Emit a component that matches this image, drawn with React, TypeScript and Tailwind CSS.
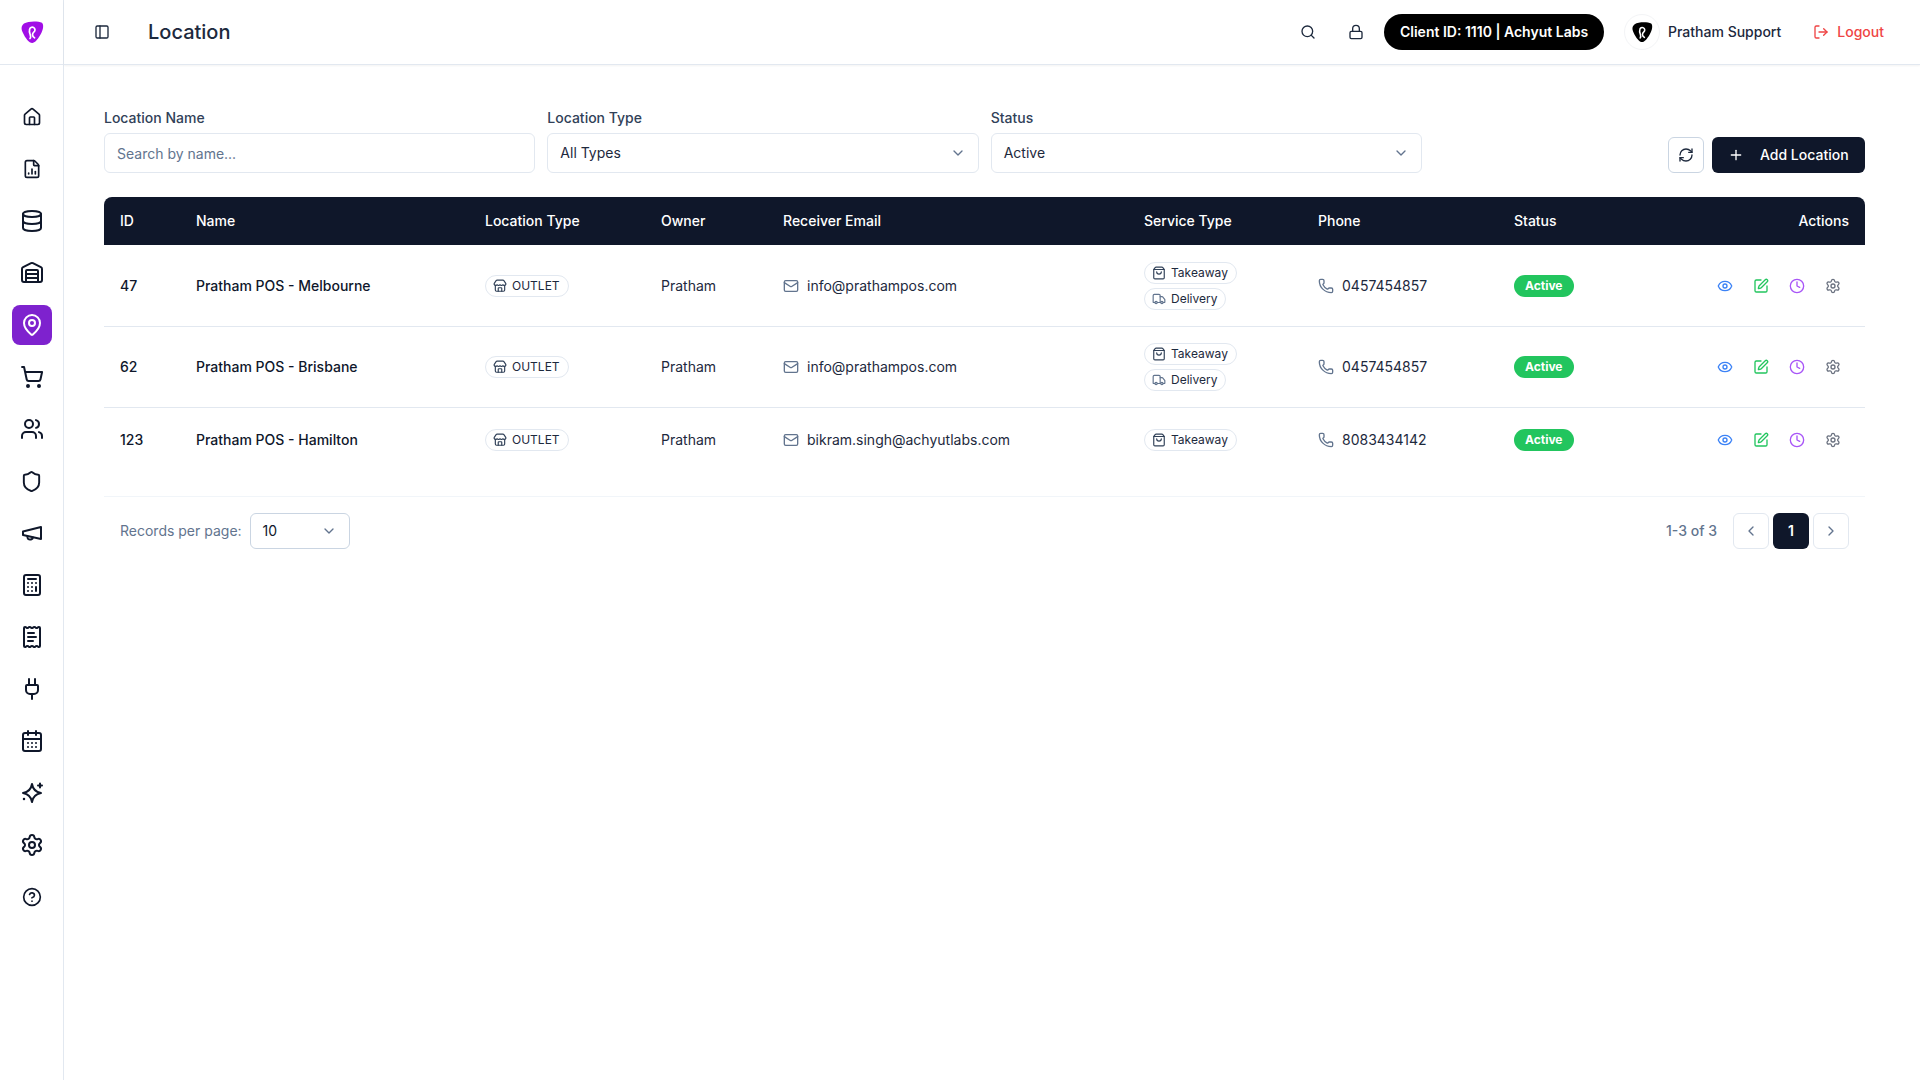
import {
  Calculator,
  CalendarDays,
  ChevronDown,
  ChevronLeft,
  ChevronRight,
  CircleHelp,
  Clock,
  Database,
  Eye,
  FileChartColumn,
  House,
  Lock,
  LogOut,
  Mail,
  MapPin,
  PanelLeft,
  Phone,
  Plug,
  Plus,
  ReceiptText,
  RefreshCw,
  Search,
  Settings,
  Shield,
  ShoppingBag,
  ShoppingCart,
  SquarePen,
  Store,
  Truck,
  Users,
  Warehouse,
} from "lucide-react"

function MegaphoneIcon({ size }: { size: number }) {
  return (
    <svg width={size} height={size} viewBox="0 0 24 24" fill="none" stroke="currentColor" strokeWidth="2" strokeLinecap="round" strokeLinejoin="round">
      <path d="M3 10.5 21 6v12L3 14z" />
      <path d="M7.5 15.5c-.4 2.4 1 3.4 3.5 3 1.2-.3 1.8-1 2-2" />
    </svg>
  )
}

function SparkleIcon({ size }: { size: number }) {
  return (
    <svg width={size} height={size} viewBox="0 0 24 24" fill="none" stroke="currentColor" strokeWidth="2" strokeLinecap="round" strokeLinejoin="round">
      <path d="M12 3c.8 5 3.5 8 9 9-5.500 1-8.200 4-9 9-.8-5-3.500-8-9-9 5.500-1 8.200-4 9-9Z" />
      <path d="M20 2.500v4M18 4.500h4" />
      <path d="M4 18h.01" strokeWidth="2.500" />
    </svg>
  )
}

const navItems = [
  { icon: House, size: 20 },
  { icon: FileChartColumn, size: 20 },
  { icon: Database, size: 24 },
  { icon: Warehouse, size: 24 },
  { icon: MapPin, size: 24, active: true },
  { icon: ShoppingCart, size: 24 },
  { icon: Users, size: 24 },
  { icon: Shield, size: 23 },
  { icon: MegaphoneIcon, size: 24 },
  { icon: Calculator, size: 24 },
  { icon: ReceiptText, size: 24 },
  { icon: Plug, size: 24 },
  { icon: CalendarDays, size: 24 },
  { icon: SparkleIcon, size: 24 },
  { icon: Settings, size: 24 },
  { icon: CircleHelp, size: 20 },
]

const locations = [
  {
    id: 47,
    name: "Pratham POS - Melbourne",
    email: "info@prathampos.com",
    services: ["Takeaway", "Delivery"],
    phone: "0457454857",
  },
  {
    id: 62,
    name: "Pratham POS - Brisbane",
    email: "info@prathampos.com",
    services: ["Takeaway", "Delivery"],
    phone: "0457454857",
  },
  {
    id: 123,
    name: "Pratham POS - Hamilton",
    email: "bikram.singh@achyutlabs.com",
    services: ["Takeaway"],
    phone: "8083434142",
  },
]

function Logo({ size, fill }: { size: number; fill: string }) {
  return (
    <svg width={size} height={size} viewBox="0 0 24 24">
      <path
        d="M4 3.500C8 1 18 .8 22 2.800c2 2 1.400 7-1.600 12-3 5-5.600 8.200-8.200 8.200-3 0-7-5-9.200-10C1 9 1 6 4 3.500Z"
        fill={fill}
      />
      <path
        d="M10 18.500c2.200-2.200-1.600-5.600-.4-9a2.700 2.700 0 1 1 4.400 2.400c-1.800 1.600-2.400 4 .6 6"
        fill="none"
        stroke="#fff"
        strokeWidth="1.700"
        strokeLinecap="round"
      />
    </svg>
  )
}

function Sidebar() {
  return (
    <aside className="flex w-16 shrink-0 flex-col border-r border-slate-200 bg-white">
      <div className="flex h-[65px] items-center justify-center border-b border-slate-200">
        <Logo size={24} fill="#a10ee6" />
      </div>
      <nav className="flex flex-col items-center gap-3 pt-8">
        {navItems.map((item, i) => {
          const Icon = item.icon
          return (
            <div
              key={i}
              className={
                item.active
                  ? "flex h-10 w-10 items-center justify-center rounded-lg bg-[#7e22ce] text-white"
                  : "flex h-10 w-10 items-center justify-center rounded-lg text-[#0f172a]"
              }
            >
              <Icon size={item.size} />
            </div>
          )
        })}
      </nav>
    </aside>
  )
}

function TopBar() {
  return (
    <header className="flex h-[65px] shrink-0 items-center border-b border-slate-200 bg-white pl-[30px] pr-[36px] shadow-xs">
      <PanelLeft size={16} className="text-slate-800" />
      <h1 className="ml-[38px] text-xl font-medium text-slate-800">Location</h1>
      <div className="ml-auto flex items-center">
        <Search size={16} className="text-slate-800" />
        <Lock size={16} className="ml-8 text-slate-800" />
        <div className="ml-5 flex h-9 w-[220px] items-center justify-center rounded-full bg-black text-sm font-semibold text-white">
          Client ID: 1110 | Achyut Labs
        </div>
        <div className="ml-5 flex h-9 w-9 items-center justify-center rounded-full border border-gray-100">
          <Logo size={22} fill="#000" />
        </div>
        <span className="ml-[8px] text-sm font-medium text-slate-800">Pratham Support</span>
        <div className="ml-8 flex items-center gap-2 text-sm font-medium text-[#ef4444]">
          <LogOut size={16} />
          Logout
        </div>
      </div>
    </header>
  )
}

function FilterSelect({ label, value }: { label: string; value: string }) {
  return (
    <div>
      <label className="mb-[5px] block text-sm font-medium text-slate-700">{label}</label>
      <button className="flex h-10 w-full items-center justify-between rounded-md border border-slate-200 bg-white px-3 text-sm text-slate-800">
        {value}
        <ChevronDown size={16} className="text-slate-500" />
      </button>
    </div>
  )
}

function Filters() {
  return (
    <div className="mb-6 flex items-end justify-between">
      <div className="grid w-[1318px] grid-cols-3 gap-3">
        <div>
          <label className="mb-[5px] block text-sm font-medium text-slate-700">Location Name</label>
          <input
            type="text"
            placeholder="Search by name..."
            className="h-10 w-full rounded-md border border-slate-200 bg-white px-3 text-sm outline-none placeholder:text-slate-500"
          />
        </div>
        <FilterSelect label="Location Type" value="All Types" />
        <FilterSelect label="Status" value="Active" />
      </div>
      <div className="flex items-center gap-2">
        <button className="flex h-9 w-9 items-center justify-center rounded-md border border-slate-300 bg-white text-slate-800">
          <RefreshCw size={16} />
        </button>
        <button className="flex h-9 w-[153px] items-center gap-[16px] rounded-md bg-[#0f172a] pl-[16px] text-sm font-medium text-white">
          <Plus size={16} />
          Add Location
        </button>
      </div>
    </div>
  )
}

function Pill({ icon, children }: { icon: React.ReactNode; children: React.ReactNode }) {
  return (
    <span className="inline-flex h-[22px] items-center gap-[5px] rounded-full border border-slate-200 bg-white pl-[7px] pr-2 text-xs text-slate-800">
      {icon}
      {children}
    </span>
  )
}

function LocationRow({ row }: { row: (typeof locations)[number] }) {
  return (
    <tr className="border-t border-slate-200 text-sm text-slate-900 first:border-t-white">
      <td className="h-[66px] px-4 py-4 font-medium">{row.id}</td>
      <td className="px-4 py-4 font-medium">{row.name}</td>
      <td className="px-4 py-4">
        <div className="flex">
          <Pill icon={<Store size={14} className="text-slate-700" />}>OUTLET</Pill>
        </div>
      </td>
      <td className="px-4 py-4 text-slate-800">Pratham</td>
      <td className="px-4 py-4">
        <div className="flex items-center gap-2 text-slate-800">
          <Mail size={16} className="text-slate-500" />
          {row.email}
        </div>
      </td>
      <td className="px-4 py-4">
        <div className="flex flex-col items-start gap-1">
          {row.services.map((service) => (
            <Pill
              key={service}
              icon={
                service === "Takeaway" ? (
                  <ShoppingBag size={14} className="text-slate-700" />
                ) : (
                  <Truck size={14} className="text-slate-500" />
                )
              }
            >
              {service}
            </Pill>
          ))}
        </div>
      </td>
      <td className="px-4 py-4">
        <div className="flex items-center gap-2 text-slate-800">
          <Phone size={16} className="text-slate-500" />
          {row.phone}
        </div>
      </td>
      <td className="px-4 py-4">
        <span className="inline-flex h-[22px] items-center rounded-full bg-[#22c55e] px-[11px] text-xs font-bold text-white">
          Active
        </span>
      </td>
      <td className="px-4 py-4">
        <div className="mr-2 flex items-center justify-end gap-5">
          <Eye size={16} className="text-[#3b82f6]" />
          <SquarePen size={16} className="text-[#22c55e]" />
          <Clock size={16} className="text-[#a855f7]" />
          <Settings size={16} className="text-[#6b7280]" />
        </div>
      </td>
    </tr>
  )
}

function LocationTable() {
  const head = "px-4 text-left text-sm font-medium"
  return (
    <table className="w-full table-fixed border-collapse">
      <colgroup>
        <col className="w-[76px]" />
        <col className="w-[289px]" />
        <col className="w-[176px]" />
        <col className="w-[122px]" />
        <col className="w-[361px]" />
        <col className="w-[174px]" />
        <col className="w-[196px]" />
        <col className="w-[150px]" />
        <col />
      </colgroup>
      <thead>
        <tr className="h-12 bg-[#0f172a] text-white">
          <th className={`${head} rounded-tl-lg`}>ID</th>
          <th className={head}>Name</th>
          <th className={head}>Location Type</th>
          <th className={head}>Owner</th>
          <th className={head}>Receiver Email</th>
          <th className={head}>Service Type</th>
          <th className={head}>Phone</th>
          <th className={head}>Status</th>
          <th className="rounded-tr-lg px-4 text-right text-sm font-medium">Actions</th>
        </tr>
      </thead>
      <tbody>
        {locations.map((row) => (
          <LocationRow key={row.id} row={row} />
        ))}
      </tbody>
    </table>
  )
}

function Pagination() {
  return (
    <div className="mt-[23px] flex items-center justify-between border-t border-slate-100 px-4 pt-4">
      <div className="flex items-center gap-2 text-sm text-slate-500">
        Records per page:
        <button className="flex h-9 w-[100px] items-center justify-between rounded-md border border-slate-300 bg-white px-3 text-sm text-slate-900">
          10
          <ChevronDown size={16} className="text-slate-500" />
        </button>
      </div>
      <div className="flex items-center">
        <span className="mr-4 text-sm font-medium text-slate-500">1-3 of 3</span>
        <div className="flex items-center gap-1">
          <button className="flex h-9 w-9 items-center justify-center rounded-md border border-slate-200 bg-white text-slate-500">
            <ChevronLeft size={16} />
          </button>
          <button className="flex h-9 w-9 items-center justify-center rounded-md bg-[#0f172a] text-sm font-semibold text-white">
            1
          </button>
          <button className="flex h-9 w-9 items-center justify-center rounded-md border border-slate-200 bg-white text-slate-500">
            <ChevronRight size={16} />
          </button>
        </div>
      </div>
    </div>
  )
}

export default function App() {
  return (
    <div className="flex h-screen bg-white font-['Inter',sans-serif]">
      <Sidebar />
      <div className="flex min-w-0 flex-1 flex-col">
        <TopBar />
        <main className="flex-1 pb-8 pl-10 pr-[55px] pt-[43px]">
          <Filters />
          <LocationTable />
          <Pagination />
        </main>
      </div>
    </div>
  )
}
